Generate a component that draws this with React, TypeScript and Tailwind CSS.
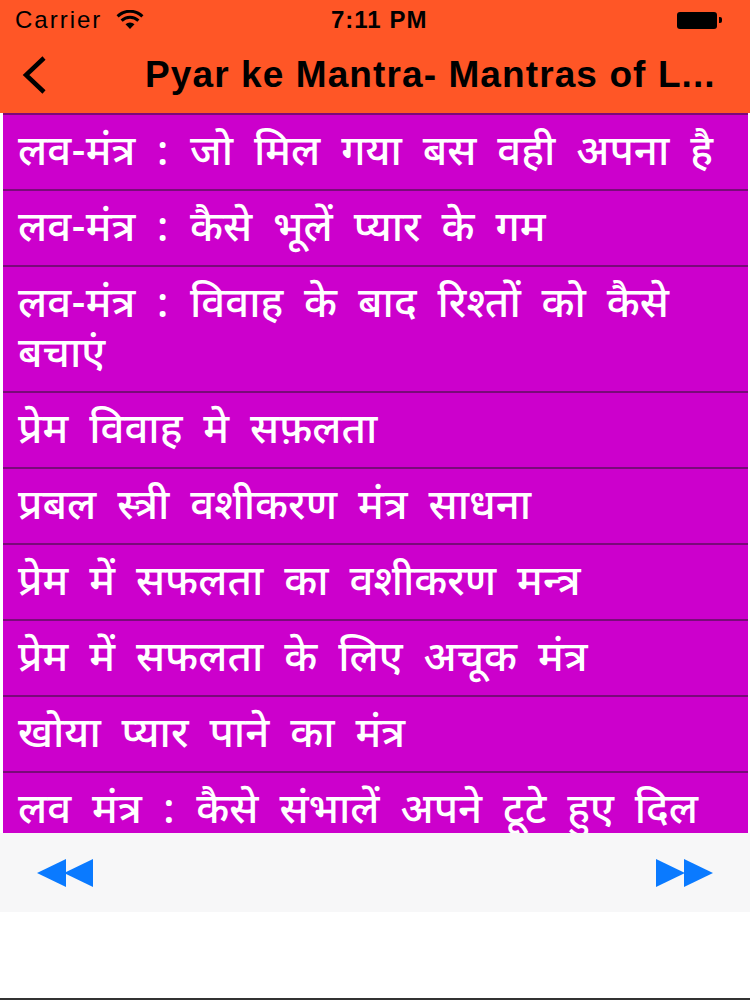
import React from "react";

const items: string[] = [
  "लव-मंत्र : जो मिल गया बस वही अपना है",
  "लव-मंत्र : कैसे भूलें प्यार के गम",
  "लव-मंत्र : विवाह के बाद रिश्तों को कैसे बचाएं",
  "प्रेम विवाह मे सफ़लता",
  "प्रबल स्त्री वशीकरण मंत्र साधना",
  "प्रेम में सफलता का वशीकरण मन्त्र",
  "प्रेम में सफलता के लिए अचूक मंत्र",
  "खोया प्यार पाने का मंत्र",
  "लव मंत्र : कैसे संभालें अपने टूटे हुए दिल",
];

export default function App() {
  return (
    <div className="w-[750px] h-[1000px] bg-white flex flex-col overflow-hidden" style={{ fontFamily: '"Liberation Sans", Arial, sans-serif' }}>
      {/* Header */}
      <div className="bg-[#ff5626] h-[113px] flex flex-col shrink-0">
        <div className="h-[40px] flex items-center px-[15px] relative">
          <div className="flex items-center gap-[14px]">
            <span className="text-[24px] text-black tracking-[2px]">Carrier</span>
            <svg width="28" height="20" viewBox="0 0 28 20">
              <path d="M14 19 L9.5 14.2 A6.5 6.5 0 0 1 18.5 14.2 Z" fill="black" />
              <path d="M5.6 10.6 A12 12 0 0 1 22.4 10.6" stroke="black" strokeWidth="3" fill="none" />
              <path d="M1.6 6.4 A17.5 17.5 0 0 1 26.4 6.4" stroke="black" strokeWidth="3" fill="none" />
            </svg>
          </div>
          <span className="absolute left-[331px] text-[24px] font-bold text-black tracking-[1px]">7:11 PM</span>
          <div className="ml-auto flex items-center gap-[2px] mr-[13px]">
            <div className="w-[40px] h-[17px] bg-black rounded-[3px]" />
            <div className="w-[3px] h-[6px] bg-black rounded-r-[2px]" />
          </div>
        </div>
        <div className="flex-1 flex items-center pb-[4px]">
          <svg className="ml-[18px]" width="32" height="40" viewBox="0 0 32 40">
            <path d="M26 3 L8 20 L26 37" stroke="black" strokeWidth="4.5" fill="none" strokeLinejoin="miter" />
          </svg>
          <span className="ml-[95px] text-[37px] font-bold text-black tracking-[1.1px]">Pyar ke Mantra- Mantras of L...</span>
        </div>
      </div>

      {/* List */}
      <div className="h-[720px] shrink-0 overflow-hidden ml-[3px] mr-[2px] bg-[#cc00cc] border-t-2 border-[#7a0a7a]">
        {items.map((t, i) => (
          <div key={i} className="border-b-2 border-[#7a0a7a] pl-[15px] pr-[6px] pt-[15px] pb-[9px]">
            <div className="text-white text-[42px] leading-[50px] font-medium [word-spacing:10px]" style={{ fontFamily: '"Noto Sans Devanagari", "Lohit Devanagari", "Noto Sans", sans-serif' }}>
              {t}
            </div>
          </div>
        ))}
      </div>

      {/* Toolbar */}
      <div className="h-[79px] shrink-0 bg-[#f7f7f8] flex items-center justify-between px-[37px]">
        <svg width="57" height="28" viewBox="0 0 57 28">
          <polygon points="0,14 29,0 29,28" fill="#0a7aff" />
          <polygon points="27,14 56,0 56,28" fill="#0a7aff" />
        </svg>
        <svg width="57" height="28" viewBox="0 0 57 28">
          <polygon points="0,0 29,14 0,28" fill="#0a7aff" />
          <polygon points="28,0 57,14 28,28" fill="#0a7aff" />
        </svg>
      </div>

      <div className="flex-1 bg-white" />
      <div className="h-[2px] bg-[#333] shrink-0" />
    </div>
  );
}
